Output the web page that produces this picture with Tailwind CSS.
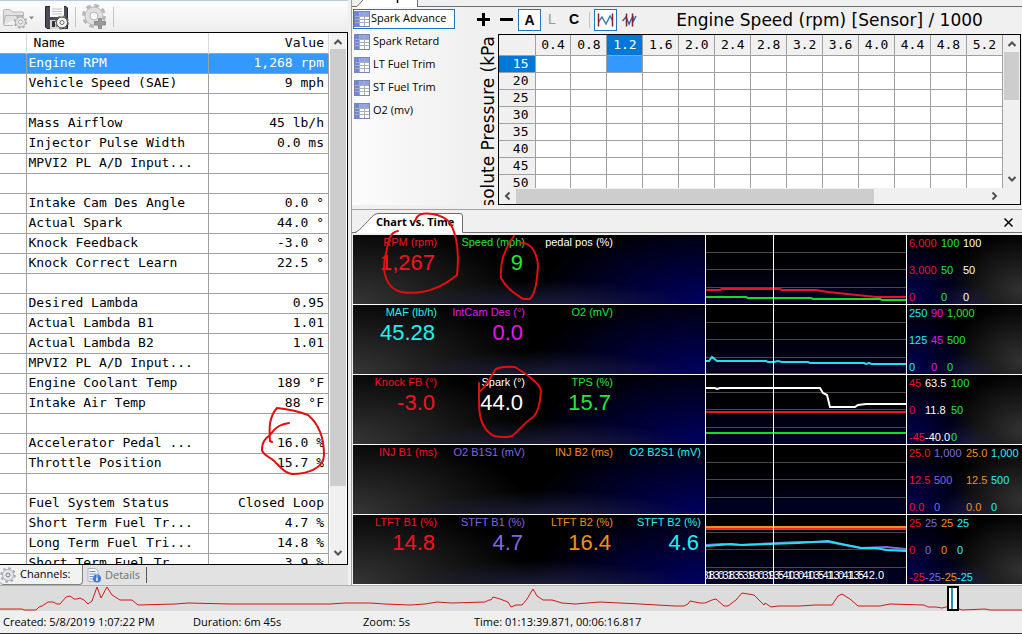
<!DOCTYPE html>
<html lang="en">
<head>
<meta charset="utf-8">
<title>Scanner</title>
<script src="https://cdn.jsdelivr.net/npm/@tailwindcss/browser@4"></script>
</head>
<body class="relative flex h-screen flex-col overflow-hidden border-b border-[#333] bg-[#f0f0f0] font-['Open_Sans','Noto_Sans',sans-serif] text-[11px] text-black">

<main class="flex min-h-0 flex-1">

  <!-- Channel list -->
  <section class="flex w-[348px] shrink-0 flex-col border-t border-[#b9cbe0]">
    <div class="flex h-[31px] shrink-0 items-center bg-linear-to-b from-[#fdfdfd] to-[#ededed] pl-0.5">
      <button aria-label="Open channel config" class="flex h-6 w-9 items-center">
        <svg width="34" height="24" viewBox="0 0 34 24" fill="none" stroke="#b4b4b4">
          <path d="M1.500 19.500V5.500Q1.500 4.500 2.500 4.500H8L10.500 7H20.500Q21.500 7 21.500 8V11M1.500 19.500Q1.500 20.500 3 20.500H11M1.500 19.500L3.500 10.500H21.500" fill="#e2e2e2"/>
          <circle cx="18.500" cy="17" r="5" fill="#e6e6e6" stroke="#aaa"/>
          <circle cx="18.500" cy="17" r="6" stroke="#aaa" stroke-width="1.500" stroke-dasharray="2.400 2.310"/>
          <circle cx="18.500" cy="17" r="2" fill="#f6f6f6" stroke="#aaa"/>
          <path d="M27 11.500h5l-2.500 3z" fill="#8a8a8a" stroke="none"/>
        </svg>
      </button>
      <button aria-label="Save channel config" class="ml-1.5 flex h-6 w-7 items-center">
        <svg width="26" height="26" viewBox="0 0 26 26">
          <path d="M1.500 2.500H22L23.500 4V24.500H3L1.500 23Z" fill="#4a4d57" stroke="#24262e"/>
          <rect x="6" y="2" width="14" height="11" fill="#fafafa"/>
          <path d="M8 5h10M8 7.500h10M8 10h10" stroke="#c4c4c4"/>
          <rect x="6" y="16" width="10" height="9" fill="#d6d6d6"/>
          <rect x="8" y="17" width="3" height="6" fill="#333"/>
          <circle cx="18" cy="18.500" r="5.500" fill="#f4f4f4" stroke="#444"/>
          <circle cx="18" cy="18.500" r="6.300" fill="none" stroke="#777" stroke-width="1.500" stroke-dasharray="2.500 2.450"/>
          <circle cx="18" cy="18.500" r="2" fill="#fff" stroke="#666"/>
        </svg>
      </button>
      <span class="ml-[3px] h-5 w-px bg-[#c4c4c4]"></span>
      <button aria-label="Add channel" class="ml-1 flex h-6 w-7 items-center">
        <svg class="shrink-0" width="28" height="26" viewBox="0 0 28 26" fill="none" stroke="#b8b8b8">
          <circle cx="14" cy="12" r="10.500" stroke-width="3" stroke-dasharray="4.600 3.647"/>
          <circle cx="14" cy="12" r="9" fill="#e0e0e0"/>
          <circle cx="14" cy="12" r="4" fill="#f6f6f6"/>
          <path d="M18.500 14.500h3v3h4v3.500h-4v3.500h-3v-3.500h-4v-3.500h4z" fill="#9a9a9a" stroke="#8c8c8c"/>
        </svg>
      </button>
      <span class="ml-[5px] h-5 w-px bg-[#c4c4c4]"></span>
    </div>

    <div class="flex min-h-0 flex-1 overflow-hidden border-t border-r border-b border-black bg-white">
      <div class="min-w-0 flex-1 overflow-hidden">
        <table class="w-full table-fixed border-collapse font-['DejaVu_Sans_Mono','Liberation_Mono',monospace] text-[13px] leading-4">
          <colgroup><col class="w-[26px]"><col><col class="w-[120px]"></colgroup>
          <thead>
            <tr class="h-5 border-b border-[#a0a0a0]">
              <th class="border-r border-[#d9d9d9]"></th>
              <th class="border-r border-[#d9d9d9] pl-[7px] text-left font-normal">Name</th>
              <th class="border-r border-[#d9d9d9] pr-1 text-right font-normal">Value</th>
            </tr>
          </thead>
          <tbody id="channels"></tbody>
        </table>
      </div>
      <div class="ml-px flex w-4 shrink-0 flex-col items-center bg-[#f0f0f0]">
        <svg class="h-4 w-4 shrink-0" viewBox="0 0 16 16" fill="none" stroke="#505050" stroke-width="2"><path d="M4.500 11L8 7.500L11.500 11"/></svg>
        <div class="w-full flex-1 bg-[#cdcdcd]"></div>
        <div class="h-[60px]"></div>
        <svg class="mb-0.5 h-4 w-4 shrink-0" viewBox="0 0 16 16" fill="none" stroke="#505050" stroke-width="2"><path d="M4.500 5L8 8.500L11.500 5"/></svg>
      </div>
      <div class="w-px bg-white"></div>
    </div>

    <div class="flex h-5 shrink-0 bg-[#e2e2e2]">
      <button class="flex w-[83px] items-center gap-1 rounded-b-sm border-r border-b border-[#808080] bg-[#f2f2f2]">
        <svg class="shrink-0" width="16" height="18" viewBox="0 0 16 18" fill="none" stroke="#a9adb3"><circle cx="8" cy="9" r="6.800" stroke-width="2" stroke-dasharray="2.700 2.640"/><circle cx="8" cy="9" r="5.500" fill="#e8eaed"/><circle cx="8" cy="9" r="2" stroke="#777"/></svg>
        <span>Channels:</span>
      </button>
      <button class="flex items-center gap-1 pl-1 text-[#707070]">
        <svg width="14" height="16" viewBox="0 0 14 16"><path d="M1 1.500H8.500L11 4V14.500H1Z" fill="#f4f6fb" stroke="#a9b2c4"/><path d="M2.500 4.500h6M2.500 7h7M2.500 9.500h4M2.500 12h4" stroke="#7c8db5"/><circle cx="10" cy="11.500" r="4" fill="#3b78d8"/><path d="M10 10.500v3.500M10 8.500v1" stroke="#fff" stroke-width="1.500"/></svg>
        <span>Details</span>
      </button>
      <span class="mt-0.5 ml-1.5 h-4 w-px bg-[#555]"></span>
    </div>
  </section>

  <!-- Graphs and chart -->
  <section class="ml-[3px] flex min-w-0 flex-1 flex-col border-l border-[#a0a0a0]">

    <div class="flex h-[210px] shrink-0 flex-col border-b border-[#a0a0a0]">
      <div class="flex h-[7px] shrink-0 border-b border-[#6e6e6e]">
        <svg class="-mb-px ml-1" width="62" height="7" viewBox="0 0 62 7"><path d="M0 7L8 0H61V7Z" fill="#fff"/><path d="M0 6.500H1L7 0M61.500 0V6.500" fill="none" stroke="#6e6e6e"/><path d="M41.500 0V3" stroke="#000" stroke-width="1.500"/></svg>
      </div>
      <div class="flex min-h-0 flex-1 pb-1">
        <ul id="graphs" class="w-[114px] shrink-0 bg-linear-to-r from-[#fcfcfc] to-[#f0f0f0]"></ul>

        <div class="flex min-w-0 flex-1 flex-col">
          <div class="mb-0.5 flex h-[25px] shrink-0 items-center pl-1.5 font-['Liberation_Sans',sans-serif] text-[14px] font-bold">
            <button aria-label="Increase" class="flex w-[22px] justify-center"><svg width="13" height="13" viewBox="0 0 13 13" stroke="#000" stroke-width="3"><path d="M6.500 0v13M0 6.500h13"/></svg></button>
            <button aria-label="Decrease" class="flex w-6 justify-center"><svg width="13" height="13" viewBox="0 0 13 13" stroke="#000" stroke-width="3"><path d="M0 6.500h13"/></svg></button>
            <button class="h-[22px] w-[23px] border border-[#1c76c4] bg-white text-center leading-5">A</button>
            <button class="w-[22px] text-center font-normal text-[#9a9a9a]">L</button>
            <button class="w-[22px] text-center">C</button>
            <span class="ml-1 h-4 w-px bg-[#c4c4c4]"></span>
            <button aria-label="Line view" class="ml-1 flex h-[22px] w-[23px] items-center justify-center border border-[#1c76c4] bg-white"><svg width="17" height="14" viewBox="0 0 17 14" fill="none"><path d="M1.500 9L5 4L9 11L13 3L15.500 7" stroke="#3f7fb5" stroke-width="1.500"/><path d="M1.500 0.500v13M15.500 0.500v13" stroke="#8f1d2c" stroke-width="1.500"/></svg></button>
            <button aria-label="Cell view" class="ml-1 flex h-[22px] w-4 items-center justify-center"><svg width="15" height="14" viewBox="0 0 15 14" fill="none"><path d="M0.500 8L4 4L7 11L11 3L11 9L14 3" stroke="#2f6aa8" stroke-width="1.500"/><path d="M4.500 0.500v13M10.500 0.500v13" stroke="#8f1d2c" stroke-width="1.500"/></svg></button>
            <h2 class="flex-1 text-center font-['DejaVu_Sans',sans-serif] text-[17px] leading-5 font-normal whitespace-nowrap">Engine Speed (rpm) [Sensor] / 1000</h2>
          </div>
          <div class="flex min-h-0 flex-1">
            <div class="flex w-8 shrink-0 items-start justify-end overflow-hidden pt-0.5">
              <div class="rotate-180 font-['DejaVu_Sans',sans-serif] text-[17px] leading-5 whitespace-nowrap [writing-mode:vertical-rl]">Manifold Absolute Pressure (kPa</div>
            </div>
            <div class="mr-px grid min-w-0 flex-1 grid-cols-[minmax(0,1fr)_17px] grid-rows-[minmax(0,1fr)_16px] border border-black">
              <div class="overflow-hidden">
                <table class="w-full table-fixed border-collapse font-['DejaVu_Sans_Mono','Liberation_Mono',monospace] text-[13px] leading-4">
                  <colgroup><col class="w-9"></colgroup>
                  <thead id="axis"></thead>
                  <tbody id="cells"></tbody>
                </table>
              </div>
              <div class="flex flex-col items-center bg-[#f0f0f0]">
                <svg class="h-[17px] w-4 shrink-0" viewBox="0 0 16 17" fill="none" stroke="#505050" stroke-width="2"><path d="M4.500 11L8 7.500L11.500 11"/></svg>
                <div class="h-12 w-[15px] bg-[#cdcdcd]"></div>
                <svg class="mt-auto h-4 w-4 shrink-0" viewBox="0 0 16 16" fill="none" stroke="#505050" stroke-width="2"><path d="M4.500 5L8 8.500L11.500 5"/></svg>
              </div>
              <div class="flex items-center bg-[#f0f0f0]">
                <svg class="h-4 w-[17px] shrink-0" viewBox="0 0 17 16" fill="none" stroke="#505050" stroke-width="2"><path d="M10.500 4.500L7 8L10.500 11.500"/></svg>
                <div class="h-[15px] w-[71%] bg-[#cdcdcd]"></div>
                <svg class="ml-auto h-4 w-4 shrink-0" viewBox="0 0 16 16" fill="none" stroke="#505050" stroke-width="2"><path d="M5.500 4.500L9 8L5.500 11.500"/></svg>
              </div>
              <div class="bg-[#f0f0f0]"></div>
            </div>
          </div>
        </div>
      </div>
    </div>

    <div class="flex h-[25px] shrink-0 items-end justify-between">
      <div class="relative mb-0.5 flex h-full flex-1 items-end border-b border-[#6e6e6e]">
        <svg class="absolute -bottom-px left-0" width="112" height="20" viewBox="0 0 112 20"><path d="M3 20C8 19 17 6 22 2Q24 0.500 27 0.500H108Q110.500 0.500 110.500 3V20Z" fill="#fff"/><path d="M0 19.500H3C8 18 17 6 22 2Q24 0.500 27 0.500H108Q110.500 0.500 110.500 3V19.500" fill="none" stroke="#6e6e6e"/></svg>
        <button class="relative ml-6 pb-0.5 text-[11px] leading-4 font-bold">Chart vs. Time</button>
        <button aria-label="Close chart" class="mr-[9px] mb-1 ml-auto"><svg width="9" height="11" viewBox="0 0 9 11" stroke="#000" stroke-width="1.500"><path d="M0.500 1.500L8.500 9.500M8.500 1.500L0.500 9.500"/></svg></button>
      </div>
    </div>

    <div id="chart" class="ml-px flex min-h-0 flex-1 flex-col font-['Liberation_Sans',sans-serif] leading-[13px]"></div>
  </section>
</main>

<!-- Log overview -->
<div class="relative h-[26px] shrink-0 border-t border-[#b0b0b0] bg-[#dcdcdc]">
  <svg class="block h-[25px] w-full" viewBox="0 586 1022 25" preserveAspectRatio="none" fill="none" stroke="#d01818">
    <path d="M0 609H22L24 610H36L39 607L42 606L48 602H53L57 604H60L66 597L70 596L74 599H77L80 598L84 600L88 604L92 601L97 587L101 598L107 587L112 595L120 600H132L138 605L175 604L188 603L230 604H330L345 603H370L385 604L410 605L425 604L437 602L452 603L485 602L489 600H491L493 597L500 599L508 602L511 607L516 605H522L527 599L533 589L537 596L540 598L543 600H552L562 603L575 604L600 602L640 604L675 606H684L688 604L690 601L700 603H705L712 600L716 599L724 606H728L736 600L742 593L754 595L762 603L764 605L765 603L771 607L778 606H800L815 605H832L838 596L842 594L850 599L858 606H880L890 604L924 605L928 607H936L942 608L950 606L962 610L985 609L990 610H1022"/>
  </svg>
  <input type="range" aria-label="Log position" min="0" max="1000" value="938" class="absolute inset-x-0 top-0 h-[25px] w-full appearance-none bg-transparent [&::-webkit-slider-thumb]:h-[25px] [&::-webkit-slider-thumb]:w-3 [&::-webkit-slider-thumb]:appearance-none [&::-webkit-slider-thumb]:border-2 [&::-webkit-slider-thumb]:border-black [&::-webkit-slider-thumb]:bg-[linear-gradient(90deg,white_2px,#2090b0_2px,#2090b0_4px,white_4px)]">
</div>

<footer class="grid h-[22px] shrink-0 grid-cols-[190px_170px_111px_1fr] items-center pl-[3px]">
  <span>Created: 5/8/2019 1:07:22 PM</span>
  <span>Duration: 6m 45s</span>
  <span>Zoom: 5s</span>
  <span>Time: 01:13:39.871, 00:06:16.817</span>
</footer>

<!-- Hand-drawn marks -->
<svg class="pointer-events-none absolute top-0 left-0" width="1022" height="634" viewBox="0 0 1022 634" fill="none" stroke="#e01010" stroke-width="2" stroke-linecap="round">
  <path d="M398 231C388 232 388 246 385 258C382 272 386 288 401 292C420 295 440 289 457 275C459 258 458 236 450 223C442 213 422 211 417 217L415 221"/>
  <path d="M514 236C504 250 500 262 501 278C506 288 514 293 523 299H530C536 292 537 280 538 266C537 250 529 242 521 243"/>
  <path d="M479 392C486 388 490 377 496 369Q503 366 515 367C526 374 540 383 541 391C540 407 536 415 532 418C524 423 519 431 512 436Q503 438 494 436C484 431 479 420 479 403V383"/>
  <path d="M289 423C282 424 276 426 270 435C266 438 262 441 262 450C263 456 272 457 276 463C282 468 284 473 292 474C308 474 324 468 324 455C324 440 320 425 308 415C298 411 286 409 277 408C269 417 269 428 270 441L272 442"/>
</svg>

<script>
const channels = [
  ['Engine RPM', '1,268 rpm'], ['Vehicle Speed (SAE)', '9 mph'], ['', ''], ['Mass Airflow', '45 lb/h'],
  ['Injector Pulse Width', '0.0 ms'], ['MPVI2 PL A/D Input...', ''], ['', ''], ['Intake Cam Des Angle', '0.0 °'],
  ['Actual Spark', '44.0 °'], ['Knock Feedback', '-3.0 °'], ['Knock Correct Learn', '22.5 °'], ['', ''],
  ['Desired Lambda', '0.95'], ['Actual Lambda B1', '1.01'], ['Actual Lambda B2', '1.01'], ['MPVI2 PL A/D Input...', ''],
  ['Engine Coolant Temp', '189 °F'], ['Intake Air Temp', '88 °F'], ['', ''], ['Accelerator Pedal ...', '16.0 %'],
  ['Throttle Position', '15.7 %'], ['', ''], ['Fuel System Status', 'Closed Loop'], ['Short Term Fuel Tr...', '4.7 %'],
  ['Long Term Fuel Tri...', '14.8 %'], ['Short Term Fuel Tr...', '3.9 %'],
];
document.getElementById('channels').innerHTML = channels.map(([name, value], i) => `
  <tr class="${i ? 'h-5 border-b border-[#a0a0a0]' : 'h-5 border-b border-[#a0a0a0] bg-[#3399ff] text-white'}">
    <td class="border-r border-[#a0a0a0]"></td>
    <td class="border-r border-[#a0a0a0] pl-0.5 whitespace-nowrap">${name}</td>
    <td class="border-r border-[#a0a0a0] pr-1 text-right whitespace-nowrap">${value}</td>
  </tr>`).join('');

document.getElementById('graphs').innerHTML = ['Spark Advance', 'Spark Retard', 'LT Fuel Trim', 'ST Fuel Trim', 'O2 (mv)'].map((name, i) => `
  <li class="flex h-[23px] items-center">
    <button class="${i ? 'ml-px flex h-5 items-center gap-[3px] border border-transparent' : 'ml-px flex h-5 w-[102px] items-center gap-px border border-[#1c76c4] bg-white whitespace-nowrap'}">
      <svg width="16" height="16" viewBox="0 0 16 16"><rect x="0.500" y="0.500" width="15" height="15" fill="#fff" stroke="#7a86b8"/><rect x="1" y="1" width="14" height="4" fill="#8ea2e6"/><rect x="1" y="1" width="4" height="14" fill="#6f86dd"/><path d="M5.500 1v14M10.500 1v14M1 5.500h14M1 8.500h14M1 11.500h14" stroke="#a9aebf"/></svg>
      <span>${name}</span>
    </button>
  </li>`).join('');

const rpm = ['0.4', '0.8', '1.2', '1.6', '2.0', '2.4', '2.8', '3.2', '3.6', '4.0', '4.4', '4.8', '5.2'];
document.getElementById('axis').innerHTML = `<tr class="h-5 border-b border-[#a0a0a0] bg-[#f0f0f0]"><th class="border-r border-[#a0a0a0]"></th>${rpm.map(v =>
  `<th class="${v === '1.2' ? 'border-r border-[#a0a0a0] bg-[#0078d7] p-0 text-center font-normal text-white' : 'border-r border-[#a0a0a0] p-0 text-center font-normal'}">${v}</th>`).join('')}</tr>`;
document.getElementById('cells').innerHTML = [15, 20, 25, 30, 35, 40, 45, 50].map(p => `
  <tr class="h-[17px] border-b border-[#a0a0a0] bg-white">
    <th class="${p === 15 ? 'border-r border-[#a0a0a0] bg-[#0078d7] p-0 pr-1.5 text-right font-normal text-white' : 'border-r border-[#a0a0a0] bg-[#f0f0f0] p-0 pr-1.5 text-right font-normal'}">${p}</th>
    ${rpm.map(v => `<td class="${p === 15 && v === '1.2' ? 'border-r border-[#a0a0a0] bg-[#3399ff]' : 'border-r border-[#a0a0a0]'}"></td>`).join('')}
  </tr>`).join('');

const R = 'text-[#f01420]', G = 'text-[#22e63a]', W = 'text-white', C = 'text-[#22f0f0]', M = 'text-[#e818e8]', V = 'text-[#7b6be0]', O = 'text-[#f09018]';
const rows = [
  { gauges: [['RPM (rpm)', '1,267', R], ['Speed (mph)', '9', G], ['pedal pos (%)', '', W]],
    scales: [['w-8', R, '6,000', '3,000', '0'], ['w-[22px]', G, '100', '50', '0'], ['w-6', W, '100', '50', '0']],
    lines: [['#e8142a', 'M0 55H14L16 54H74L76 55H110L122 57L170 62H200'], ['#18d828', 'M0 62H40L42 63H105L107 64H174L176 65H200']] },
  { gauges: [['MAF (lb/h)', '45.28', C], ['IntCam Des (°)', '0.0', M], ['O2 (mV)', '', G]],
    scales: [['w-[22px]', C, '250', '125', '0'], ['w-4', M, '90', '45', '0'], ['w-8', G, '1,000', '500', '0']],
    lines: [['#901890', 'M0 69H200'], ['#22e0f0', 'M0 56H3L6 52L11 56H60L62 57H68L72 56L76 57H102L104 58H158L160 59L163 58L166 59H200']] },
  { gauges: [['Knock FB (°)', '-3.0', R], ['Spark (°)', '44.0', W], ['TPS (%)', '15.7', G]],
    scales: [['w-4', R, '45', '0', '-45'], ['w-[26px]', W, '63.5', '11.8', '-40.0'], ['w-8', G, '100', '50', '0']],
    lines: [['#e8142a', 'M0 37H200'], ['#18d828', 'M0 58H200'], ['#ffffff', 'M0 13H9L11 14L14 13H114L117 18L121 20L124 32H149L152 30L160 29H200']] },
  { gauges: [['INJ B1 (ms)', '', R], ['O2 B1S1 (mV)', '', V], ['INJ B2 (ms)', '', O], ['O2 B2S1 (mV)', '', C]],
    scales: [['w-[25px]', R, '25.0', '12.5', '0.0'], ['w-8', V, '1,000', '500', '0'], ['w-[25px]', O, '25.0', '12.5', '0.0'], ['w-7', C, '1,000', '500', '0']],
    lines: [] },
  { gauges: [['LTFT B1 (%)', '14.8', R], ['STFT B1 (%)', '4.7', V], ['LTFT B2 (%)', '16.4', O], ['STFT B2 (%)', '4.6', C]],
    scales: [['w-4', R, '25', '0', '-25'], ['w-4', V, '25', '0', '-25'], ['w-4', O, '25', '0', '-25'], ['w-4', C, '25', '0', '-25']],
    lines: [['#e83018', 'M0 14H200'], ['#f09018', 'M0 12H200'], ['#7b6be0', 'M0 30L16 29L34 30L92 27L122 27L145 31L155 33L180 32L200 34'], ['#22e0f0', 'M0 31L13 30L25 29L36 30L92 28L122 26L140 30L155 33H170L180 35L200 36']] },
];
const times = ['13:38.0', '13:38.5', '13:39.0', '13:39.5', '13:40.0', '13:40.5', '13:41.0', '13:41.5', '13:42.0'];
document.getElementById('chart').innerHTML = rows.map((row, i) => `
  <div class="flex min-h-0 flex-1 border-b border-white bg-black">
    <div class="grid min-w-0 flex-1 grid-cols-4 bg-[radial-gradient(ellipse_45%_50%_at_55%_115%,#26264c,transparent),radial-gradient(ellipse_50%_120%_at_0%_100%,#363636,transparent),radial-gradient(ellipse_50%_120%_at_100%_100%,#000062,transparent)] pt-px text-[11px]">
      ${row.gauges.map(([label, value, color]) => `<div class="${color} flex flex-col items-end pr-1 text-right whitespace-nowrap"><span>${label}</span><span class="pr-0.5 text-[22px] leading-7">${value}</span></div>`).join('')}
    </div>
    <div class="relative w-[202px] shrink-0 overflow-hidden border-x border-white bg-linear-to-b from-black to-[#000028]">
      <svg class="block h-full w-full" viewBox="0 0 200 69" preserveAspectRatio="none" fill="none">
        <path d="M0 17.500H200M0 34.500H200M0 52.500H200" stroke="#484850"/>
        ${row.lines.map(([color, d]) => `<path d="${d}" stroke="${color}" stroke-width="2"/>`).join('')}
        <path d="M67.500 0V69" stroke="#fff"/>
      </svg>
      ${i === 4 ? `<div class="absolute right-[22px] bottom-0.5 flex text-[11px] text-white">${times.map(t => `<span class="flex w-5 justify-end whitespace-nowrap"><span>${t}</span></span>`).join('')}</div>` : ''}
    </div>
    <div class="flex w-[115px] shrink-0 overflow-hidden bg-[radial-gradient(ellipse_60%_90%_at_0%_90%,#000050,transparent),radial-gradient(ellipse_35%_40%_at_50%_110%,#202048,transparent),radial-gradient(ellipse_65%_85%_at_100%_80%,#323232,transparent)] pt-0.5 pl-0.5 text-[11px]">
      ${row.scales.map(([width, color, top, mid, low]) => `<div class="${width} ${color} flex shrink-0 flex-col justify-between whitespace-nowrap"><span>${top}</span><span>${mid}</span><span>${low}</span></div>`).join('')}
    </div>
  </div>`).join('');
</script>
</body>
</html>
